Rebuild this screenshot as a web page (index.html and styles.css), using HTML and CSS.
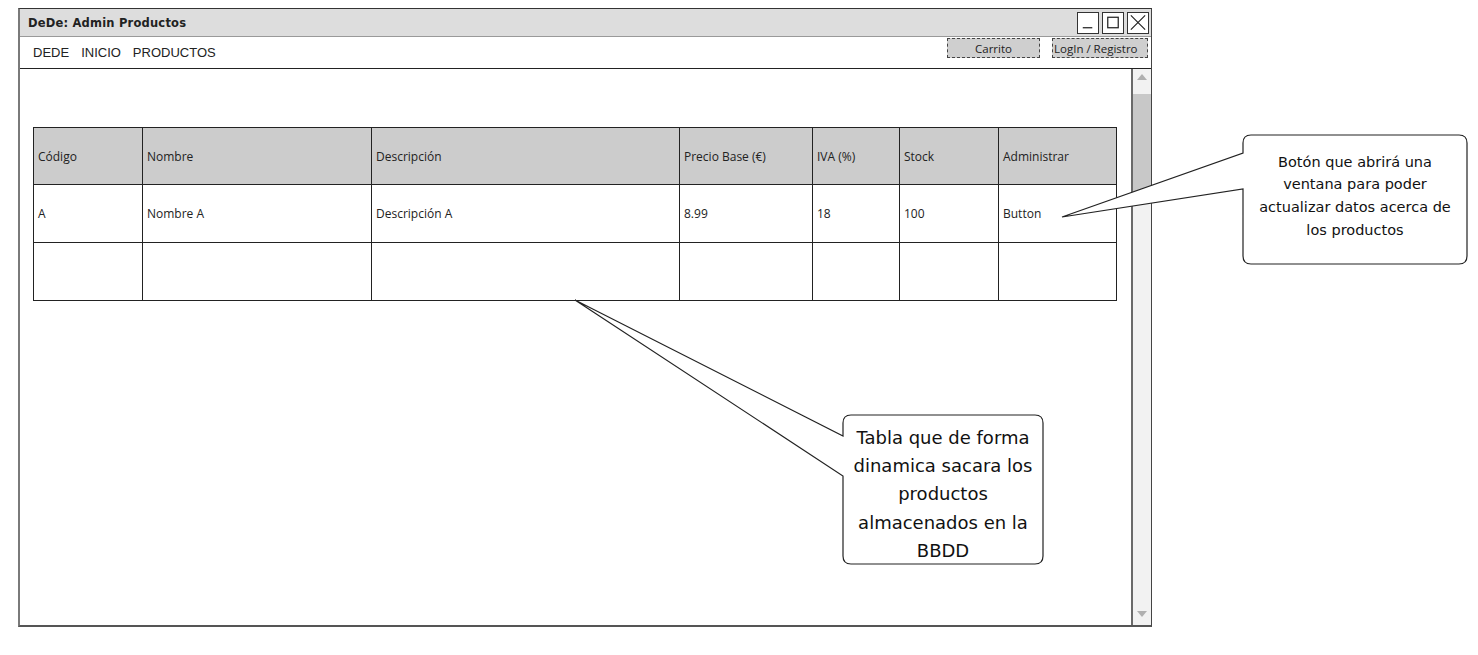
FILE: index.html
```html
<!DOCTYPE html>
<html lang="es">
<head>
<meta charset="utf-8">
<title>DeDe: Admin Productos</title>
<link rel="stylesheet" href="styles.css">
</head>
<body>
<div class="window">
  <div class="titlebar">
    <span class="title">DeDe: Admin Productos</span>
    <div class="controls">
      <span class="ctl"><svg width="21" height="21" viewBox="0 0 21 21"><line x1="5" y1="16" x2="15" y2="16" stroke="#222" stroke-width="1.3"/></svg></span>
      <span class="ctl"><svg width="21" height="21" viewBox="0 0 21 21"><rect x="5" y="5" width="11" height="11" fill="none" stroke="#222" stroke-width="1.3"/></svg></span>
      <span class="ctl"><svg width="21" height="21" viewBox="0 0 21 21"><path d="M3 3 L18 18 M18 3 L3 18" stroke="#222" stroke-width="1.2"/></svg></span>
    </div>
  </div>
  <div class="navbar">
    <nav class="nav"><span>DEDE</span><span>INICIO</span><span>PRODUCTOS</span></nav>
    <div class="navbtns">
      <span class="btn btn-cart">Carrito</span>
      <span class="btn btn-login">LogIn / Registro</span>
    </div>
  </div>
  <div class="content">
    <div class="main">
      <table class="grid">
        <colgroup>
          <col style="width:109px"><col style="width:229px"><col style="width:308px"><col style="width:133px"><col style="width:87px"><col style="width:99px"><col style="width:118px">
        </colgroup>
        <thead>
          <tr><th>Código</th><th>Nombre</th><th>Descripción</th><th>Precio Base (€)</th><th>IVA (%)</th><th>Stock</th><th>Administrar</th></tr>
        </thead>
        <tbody>
          <tr><td>A</td><td>Nombre A</td><td>Descripción A</td><td>8.99</td><td>18</td><td>100</td><td>Button</td></tr>
          <tr><td></td><td></td><td></td><td></td><td></td><td></td><td></td></tr>
        </tbody>
      </table>
    </div>
    <div class="scrollbar">
      <div class="sb-up"><span class="arrow-up"></span></div>
      <div class="sb-thumb"></div>
      <div class="sb-track"></div>
      <div class="sb-down"><span class="arrow-down"></span></div>
    </div>
  </div>
</div>

<svg class="callouts" width="1478" height="655" viewBox="0 0 1478 655">
  <path d="M1251,135 H1459 Q1467,135 1467,143 V256 Q1467,264 1459,264 H1251 Q1243,264 1243,256 V189 L1062,217 L1243,153 V143 Q1243,135 1251,135 Z" fill="#fff" stroke="#222" stroke-width="1.2"/>
  <path d="M851,415 H1035 Q1043,415 1043,423 V556 Q1043,564 1035,564 H851 Q843,564 843,556 V476 L575,300 L843,436 V423 Q843,415 851,415 Z" fill="#fff" stroke="#222" stroke-width="1.2"/>
</svg>
<div class="note note-right">Botón que abrirá una ventana para poder actualizar datos acerca de los productos</div>
<div class="note note-bottom">Tabla que de forma dinamica sacara los productos almacenados en la BBDD</div>
</body>
</html>
```

FILE: styles.css
```css
* { box-sizing: border-box; }
body {
  margin: 0;
  background: #fff;
  font-family: "Open Sans", "DejaVu Sans", sans-serif;
  color: #222;
  width: 1478px;
  height: 655px;
  position: relative;
  overflow: hidden;
}
.window {
  margin: 8px 0 0 18px;
  width: 1134px;
  height: 619px;
  border-top: 1px solid #333;
  border-right: 1px solid #444;
  border-left: 2px solid #7a7a7a;
  border-bottom: 2px solid #555;
  display: flex;
  flex-direction: column;
}
.titlebar {
  height: 28px;
  background: #dddddd;
  border-bottom: 1px solid #999;
  display: flex;
  align-items: center;
  justify-content: space-between;
  padding: 0 2px 0 8px;
}
.title {
  font-family: "DejaVu Sans", sans-serif;
  font-weight: bold;
  font-size: 11.5px;
  letter-spacing: 0.2px;
}
.controls { display: flex; gap: 3px; }
.ctl {
  width: 22px;
  height: 22px;
  border: 1px solid #333;
  background: #fff;
  display: flex;
  align-items: center;
  justify-content: center;
}
.navbar {
  height: 32px;
  border-bottom: 1px solid #222;
  display: flex;
  justify-content: space-between;
  align-items: flex-start;
  padding: 0 3px 0 13px;
}
.nav {
  font-family: "Liberation Sans", Arial, sans-serif;
  font-size: 13px;
  display: flex;
  gap: 12px;
  padding-top: 8px;
}
.navbtns { display: flex; gap: 12px; padding-top: 1px; }
.btn {
  height: 20px;
  background: #cfcfcf;
  border: 1px dashed #444;
  font-size: 11.5px;
  display: flex;
  align-items: center;
  justify-content: center;
}
.btn-cart { width: 93px; }
.btn-login { width: 96px; justify-content: flex-start; padding-left: 1px; white-space: nowrap; overflow: hidden; }
.content {
  flex: 1;
  display: flex;
}
.main {
  flex: 1;
  padding: 58px 0 0 13px;
}
.grid {
  border-collapse: collapse;
  table-layout: fixed;
  width: 1083px;
  font-size: 12px;
}
.grid th, .grid td {
  border: 1px solid #222;
  text-align: left;
  font-weight: normal;
  padding: 0 0 0 4px;
  vertical-align: middle;
}
.grid thead tr { height: 57px; }
.grid th { background: #cccccc; }
.grid tbody tr { height: 58px; }
.scrollbar {
  width: 20px;
  border-left: 2px solid #6a6a6a;
  display: flex;
  flex-direction: column;
  background: #f2f2f2;
}
.sb-up { height: 25px; display: flex; justify-content: center; padding-top: 5px; }
.sb-thumb { height: 107px; background: #c8c8c8; }
.sb-track { flex: 1; }
.sb-down { height: 20px; display: flex; justify-content: center; padding-top: 6px; }
.arrow-up {
  width: 0; height: 0;
  border-left: 5px solid transparent;
  border-right: 5px solid transparent;
  border-bottom: 6px solid #b0b0b0;
}
.arrow-down {
  width: 0; height: 0;
  border-left: 5px solid transparent;
  border-right: 5px solid transparent;
  border-top: 6px solid #b0b0b0;
}
.callouts {
  position: absolute;
  left: 0;
  top: 0;
  pointer-events: none;
}
.note {
  position: absolute;
  display: flex;
  align-items: center;
  justify-content: center;
  text-align: center;
  color: #111;
  font-family: "DejaVu Sans", sans-serif;
}
.note-right {
  left: 1243px;
  top: 137px;
  width: 224px;
  height: 118px;
  font-size: 14.5px;
  line-height: 22.7px;
  padding: 0 6px;
}
.note-bottom {
  left: 843px;
  top: 423px;
  width: 200px;
  height: 143px;
  font-size: 18px;
  line-height: 28.3px;
  padding: 0 5px;
}
```
